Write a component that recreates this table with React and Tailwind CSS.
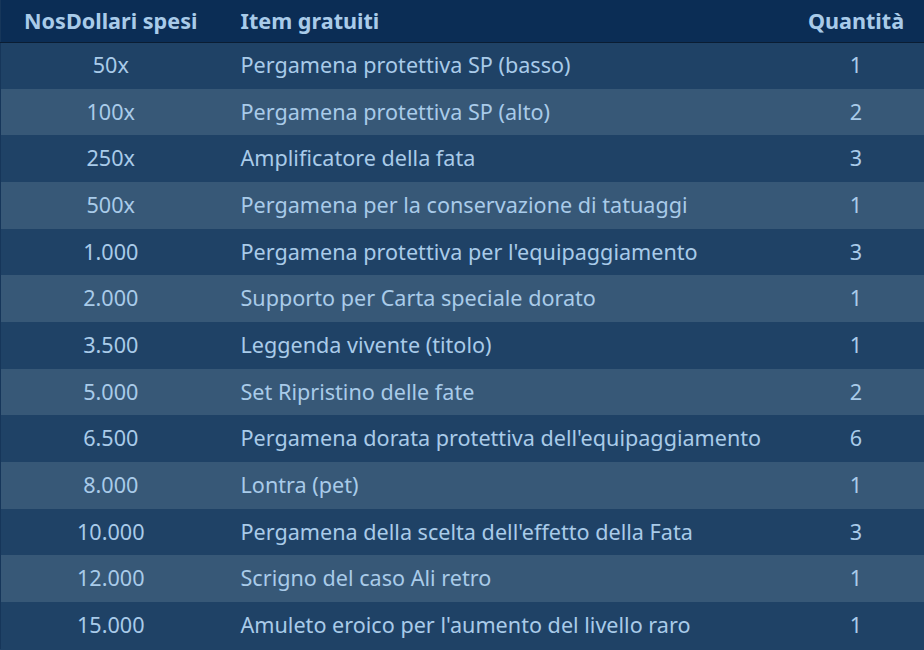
const rows = [
  ['50x', 'Pergamena protettiva SP (basso)', 1],
  ['100x', 'Pergamena protettiva SP (alto)', 2],
  ['250x', 'Amplificatore della fata', 3],
  ['500x', 'Pergamena per la conservazione di tatuaggi', 1],
  ['1.000', "Pergamena protettiva per l'equipaggiamento", 3],
  ['2.000', 'Supporto per Carta speciale dorato', 1],
  ['3.500', 'Leggenda vivente (titolo)', 1],
  ['5.000', 'Set Ripristino delle fate', 2],
  ['6.500', "Pergamena dorata protettiva dell'equipaggiamento", 6],
  ['8.000', 'Lontra (pet)', 1],
  ['10.000', "Pergamena della scelta dell'effetto della Fata", 3],
  ['12.000', 'Scrigno del caso Ali retro', 1],
  ['15.000', "Amuleto eroico per l'aumento del livello raro", 1],
]

export default function App() {
  return (
    <div
      className="h-[650px] w-[924px] overflow-hidden bg-[#1f4266] text-[#a9cbe9]"
      style={{ fontFamily: '"Noto Sans", "Open Sans", sans-serif' }}
    >
      <table className="w-full border-collapse border-l border-[#16365a] text-[21.6px]">
        <thead>
          <tr className="h-[42px] border-b border-[#0a1d33] bg-[#0b2d55] font-bold">
            <th className="w-[220px] text-center">NosDollari spesi</th>
            <th className="pl-5 text-left">Item gratuiti</th>
            <th className="w-[136px] text-center">Quantità</th>
          </tr>
        </thead>
        <tbody>
          {rows.map(([amount, item, qty], idx) => (
            <tr
              key={amount}
              className={`h-[46.67px] ${idx % 2 === 0 ? 'bg-[#1f4266]' : 'bg-[#375877]'}`}
            >
              <td className="text-center">{amount}</td>
              <td className="pl-5">{item}</td>
              <td className="text-center">{qty}</td>
            </tr>
          ))}
        </tbody>
      </table>
    </div>
  )
}
